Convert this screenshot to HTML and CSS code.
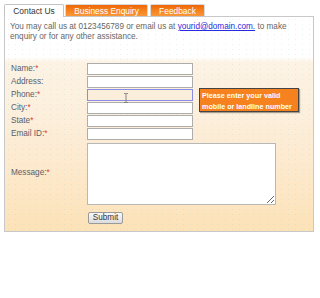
FILE: index.html
```html
<!DOCTYPE html>
<html>
<head>
<meta charset="utf-8">
<link rel="stylesheet" href="styles.css">
</head>
<body>
<div class="widget">
  <div class="tabs">
    <div class="tab active">Contact Us</div>
    <div class="tab orange biz">Business Enquiry</div>
    <div class="tab orange fb">Feedback</div>
  </div>
  <div class="panel">
    <p class="intro">You may call us at 0123456789 or email us at <a href="#">yourid@domain.com.</a> to make enquiry or for any other assistance.</p>
    <form class="form">
      <label class="lbl">Name:<span class="req">*</span></label><input class="field" type="text">
      <label class="lbl">Address:</label><input class="field" type="text">
      <label class="lbl">Phone:<span class="req">*</span></label><input class="field focus" type="text">
      <label class="lbl">City:<span class="req">*</span></label><input class="field" type="text">
      <label class="lbl">State<span class="req">*</span></label><input class="field" type="text">
      <label class="lbl">Email ID:<span class="req">*</span></label><input class="field" type="text">
      <label class="lbl msg">Message:<span class="req">*</span></label><textarea class="area"></textarea>
      <span></span><div><button class="submit" type="button">Submit</button></div>
    </form>
  </div>
  <div class="tip">Please enter your valid<br>mobile or landline number</div>
  <svg class="ibeam" width="6" height="10" viewBox="0 0 6 10"><path d="M1 0.5h1.5l0.5 0.5 0.5-0.5H5M3 1v8M1 9.5h1.5l0.5-0.5 0.5 0.5H5" fill="none" stroke="#777" stroke-width="0.9"/></svg>
</div>
</body>
</html>
```
FILE: styles.css
```css
html, body { margin: 0; padding: 0; background: #fff; }
body { font-family: "Liberation Sans", Arial, sans-serif; font-size: 8.2px; color: #666; }
.widget { position: relative; margin: 4px 0 0 4px; width: 310px; }
.tabs { display: flex; height: 13px; margin-bottom: -1px; position: relative; z-index: 2; }
.tab { box-sizing: border-box; height: 13px; line-height: 12px; text-align: center; font-size: 8.4px; }
.tab.active { width: 60px; background: #fff; border: 1px solid #c4c4c4; border-bottom: 0; border-radius: 2px 2px 0 0; color: #333; }
.tab.orange { height: 12px; line-height: 12px; color: #fff; background: linear-gradient(#ee6508 0, #f47d18 40%, #f8973a 100%); border: 1px solid #d9d9d9; border-bottom: 0; border-radius: 2px 2px 0 0; }
.tab.biz { width: 83px; margin-left: 1px; }
.tab.fb { width: 55px; margin-left: 2px; }
.panel { box-sizing: border-box; height: 216px; border: 1px solid #c8c8c8; padding: 5px 6px 8px 5px;
  background-color: #fff;
  background-image: radial-gradient(circle, rgba(150,200,205,0.22) 0.5px, transparent 0.9px), linear-gradient(to bottom, #fff 0, #fff 40px, #fdf3e4 45px, #fcefdc 98px, #fde9cd 150px, #fce2b7 100%);
  background-size: 7px 5px, 100% 100%; }
.intro { margin: 0; line-height: 10px; width: 290px; }
.intro a { color: #2a2ae0; text-decoration: underline; }
.form { display: grid; grid-template-columns: 76px auto; row-gap: 1px; margin: 21px 0 0 1px; align-items: center; }
.lbl { color: #5a5e6a; font-size: 8.2px; line-height: 12px; }
.req { color: #e04030; }
.field { box-sizing: border-box; width: 106px; height: 12px; margin: 0; padding: 0; border: 1px solid #adadad; background: #fff; }
.field.focus { border-color: #8a8ae8; background: #fbefdc; }
.area { box-sizing: border-box; width: 189px; height: 62px; margin: 2px 0 0 0; padding: 0; border: 1px solid #b8b8b8; background: #fff; display: block; }
.msg { align-self: center; }
.submit { box-sizing: border-box; margin: 6px 0 0 1px; width: 35px; height: 12px; padding: 0; font-family: "Liberation Sans", Arial, sans-serif; font-size: 8.2px; color: #333; line-height: 10px; border: 1px solid #9a9a9a; border-radius: 2px; background: linear-gradient(#fafafa, #dcdcdc); }
.tip { position: absolute; left: 195px; top: 84px; box-sizing: border-box; width: 100px; height: 24px; padding: 1px 2px; background: #f5821f; border: 1px solid #444; color: #fff; font-weight: bold; font-size: 7.2px; line-height: 11px; box-shadow: 1px 1px 1px rgba(0,0,0,0.35); white-space: nowrap; overflow: hidden; }
.ibeam { position: absolute; left: 119px; top: 89px; }
```
